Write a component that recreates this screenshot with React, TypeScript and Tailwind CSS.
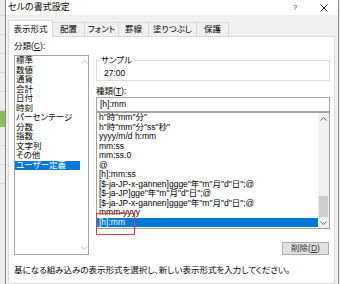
import type { ReactNode } from 'react'

const categories = [
  '標準',
  '数値',
  '通貨',
  '会計',
  '日付',
  '時刻',
  'パーセンテージ',
  '分数',
  '指数',
  '文字列',
  'その他',
  'ユーザー定義',
]

const formats = [
  'h"時"mm"分"',
  'h"時"mm"分"ss"秒"',
  'yyyy/m/d h:mm',
  'mm:ss',
  'mm:ss.0',
  '@',
  '[h]:mm:ss',
  '[$-ja-JP-x-gannen]ggge"年"m"月"d"日";@',
  '[$-ja-JP]gge"年"m"月"d"日";@',
  '[$-ja-JP-x-gannen]ggge"年"m"月"d"日";@',
  'mmm-yyyy',
  '[h]:mm',
]

function Chevron({ up, color }: { up?: boolean; color: string }) {
  return (
    <svg width="7" height="4" viewBox="0 0 7 4" fill="none">
      <path
        d={up ? 'M0.5 3.5L3.5 0.7L6.5 3.5' : 'M0.5 0.5L3.5 3.3L6.5 0.5'}
        stroke={color}
        strokeWidth="1"
      />
    </svg>
  )
}

function SheetEdge() {
  return (
    <div className="flex w-[5px] shrink-0 flex-col bg-[#ececec]">
      <div className="h-[16px] border-b border-[#d6d6d6]" />
      <div className="h-[19px] border-b border-[#d6d6d6]" />
      <div className="h-[19px] border-b border-[#d6d6d6]" />
      <div className="h-[19px] border-b border-[#d6d6d6]" />
      <div className="h-[19px] border-b border-[#d6d6d6]" />
      <div className="h-[19px] border-b border-[#d6d6d6]" />
      <div className="h-[16px] bg-[#8fbb5f]" />
      <div className="h-[19px] border-b border-[#d6d6d6]" />
      <div className="h-[19px] border-b border-[#d6d6d6]" />
      <div className="h-[19px] border-b border-[#d6d6d6]" />
      <div className="flex-1" />
    </div>
  )
}

function Tab({ w, children }: { w: string; children: ReactNode }) {
  return (
    <div
      className={`flex h-[14px] ${w} items-center justify-center border-t border-r border-[#d9d9d9] bg-[#f0f0f0] leading-[13px]`}
    >
      {children}
    </div>
  )
}

export default function App() {
  return (
    <div className="flex h-[284px] w-[340px] overflow-hidden bg-[#e6e6e6] font-['Liberation_Sans','Noto_Sans_CJK_JP',sans-serif] text-[8.5px] text-black [font-feature-settings:'palt']">
      <SheetEdge />

      <div className="flex w-[334px] shrink-0 flex-col border-x border-[#8a8a8a] bg-[#f0f0f0]">
        {/* title bar */}
        <div className="flex h-[15px] items-center bg-white">
          <span className="flex-1 pl-[2px] text-[9px] leading-[15px]">セルの書式設定</span>
          <span className="w-[30px] text-center text-[8px] leading-[15px] text-[#333]">?</span>
          <span className="flex w-[28px] items-center justify-center">
            <svg width="8" height="8" viewBox="0 0 8 8">
              <path d="M0.5 0.5L7.5 7.5M7.5 0.5L0.5 7.5" stroke="#222" strokeWidth="0.9" />
            </svg>
          </span>
        </div>

        <div className="flex flex-1 flex-col pt-[5px] pr-[3px] pl-[2px]">
          {/* tabs */}
          <div className="flex h-[16px] items-end">
            <div className="relative z-10 mb-[-1px] flex h-[17px] w-[45px] items-start justify-center border-x border-t border-[#d9d9d9] bg-white pt-[2px] leading-[12px]">
              表示形式
            </div>
            <Tab w="w-[32px]">配置</Tab>
            <Tab w="w-[34px]">フォント</Tab>
            <Tab w="w-[30px]">罫線</Tab>
            <Tab w="w-[48px]">塗りつぶし</Tab>
            <Tab w="w-[32px]">保護</Tab>
          </div>

          {/* panel */}
          <div className="flex flex-1 flex-col border border-[#d9d9d9] bg-white pr-[4px] pl-[5px]">
            <div className="flex gap-[7px]">
              {/* category column */}
              <div className="flex w-[75px] flex-col">
                <div className="mt-[4px] leading-[10px]">
                  分類(<span className="underline">C</span>):
                </div>
                <div className="mt-[4px] flex h-[200px] border border-[#a3a3a3]">
                  <div className="flex-1 leading-[9.5px]">
                    {categories.map((c, i) => (
                      <div
                        key={c}
                        className={i === categories.length - 1 ? 'bg-[#0078d7] pl-[1px] text-white' : 'pl-[1px]'}
                      >
                        {c}
                      </div>
                    ))}
                  </div>
                  <div className="flex w-[8px] flex-col items-center justify-between py-[4px]">
                    <Chevron up color="#c2c2c2" />
                    <Chevron color="#c2c2c2" />
                  </div>
                </div>
              </div>

              {/* format column */}
              <div className="flex w-[234px] flex-col">
                <fieldset className="mt-[18px] border border-[#dcdcdc]">
                  <legend className="ml-[3px] px-[1px] leading-[10px]">サンプル</legend>
                  <div className="pt-[3px] pb-[2px] pl-[7px] leading-[10px]">27:00</div>
                </fieldset>

                <div className="mt-[5px] leading-[10px]">
                  種類(<span className="underline">T</span>):
                </div>
                <div className="mt-[1px] h-[15px] border border-[#a3a3a3] pl-[3px] leading-[13px]">[h]:mm</div>

                <div className="relative flex h-[117px] border border-[#a3a3a3]">
                  <div className="flex-1 overflow-hidden">
                    <div className="leading-[9.5px]">
                      {formats.map((f, i) => (
                        <div
                          key={i}
                          className={
                            i === formats.length - 1
                              ? 'bg-[#0078d7] pl-[2px] whitespace-nowrap text-white'
                              : 'pl-[2px] whitespace-nowrap'
                          }
                        >
                          {f}
                        </div>
                      ))}
                    </div>
                  </div>
                  <div className="flex w-[11px] flex-col bg-[#f0f0f0]">
                    <div className="flex h-[11px] items-center justify-center">
                      <Chevron up color="#606060" />
                    </div>
                    <div className="flex-1" />
                    <div className="mx-[1px] h-[21px] bg-[#cdcdcd]" />
                    <div className="flex h-[11px] items-center justify-center">
                      <Chevron color="#606060" />
                    </div>
                  </div>
                  {/* highlight around the selected format */}
                  <div className="absolute top-[100px] left-[-1px] h-[22px] w-[39px] border-[1.5px] border-[#e23b3b]" />
                </div>

                <div className="mt-[13px] mr-[1px] flex h-[13px] w-[47px] items-center justify-center self-end border border-[#adadad] bg-[#e1e1e1] leading-[11px] text-[#333]">
                  削除(<span className="underline">D</span>)
                </div>
              </div>
            </div>

            <div className="mt-[10px] leading-[10px] whitespace-nowrap">
              基になる組み込みの表示形式を選択し、新しい表示形式を入力してください。
            </div>
          </div>
        </div>
      </div>

      <div className="w-[1px] shrink-0 bg-[#f0f0f0]" />
    </div>
  )
}
